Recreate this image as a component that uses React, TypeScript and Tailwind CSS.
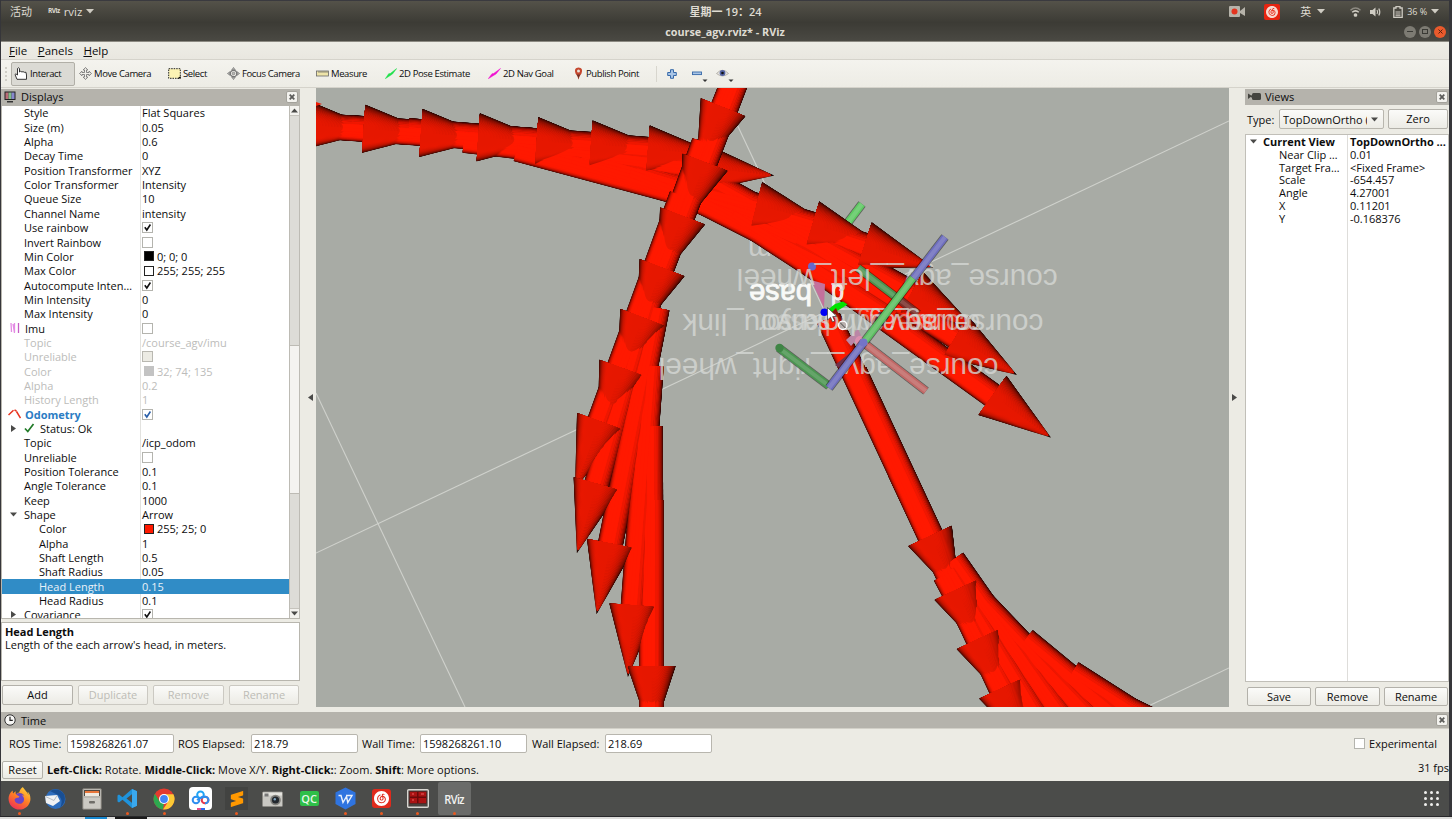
import React from "react";
import { FaFirefoxBrowser } from "react-icons/fa";
import { SiNeteasecloudmusic, SiSublimetext } from "react-icons/si";

/* ------------------------------------------------------------------ */
/* 3D view                                                            */
/* ------------------------------------------------------------------ */

type Pose = [x: number, y: number, angle: number];
type ShaftSpec = [x: number, y: number, angle: number, length: number];

const HEAD_LENGTH = 72;
const HEAD_RADIUS = 24;
const SHAFT_RADIUS = 12.5;
const SHAFT_LENGTH = 240;

/* Position of an arrow is the centre of its head's base. */
const acrossArrows: Pose[] = [
  [992.5, 395.5, 35.8],
  [955.7, 336.8, 32],
  [911.4, 293, 29],
  [864.5, 245.3, 17.9],
  [812.5, 224.5, 16.5],
  [756.5, 205.5, 14],
  [702.5, 167.5, 6.5],
  [648, 149.5, 4.5],
  [591, 144.5, 4],
  [536.7, 141.2, 4],
  [478.3, 137.3, 4],
  [421, 133, 4],
  [363.7, 128.8, 4],
  [307, 125, 4],
  [1001, 688.5, 65],
  [978.5, 639, 65],
  [956.3, 589.8, 65],
  [930, 536, 65],
];

const downArrows: Pose[] = [
  [651.5, 740, 90],
  [651.5, 666.3, 89.7],
  [633.3, 605.2, 94.3],
  [610.5, 543.5, 101.2],
  [596.7, 483.8, 106],
  [599.6, 421.2, 110],
  [622, 368, 110],
  [642.7, 317.5, 111],
  [662, 267.7, 111],
  [682.5, 216, 111],
  [705, 162.3, 111],
  [723, 107.3, 112],
];

const shaftsOf = (list: Pose[]) =>
  list.map(([x, y, a]): ShaftSpec => {
    const t = (a * Math.PI) / 180;
    return [x - SHAFT_LENGTH * Math.cos(t), y - SHAFT_LENGTH * Math.sin(t), a, SHAFT_LENGTH];
  });

const acrossShafts: ShaftSpec[] = [
  ...shaftsOf(acrossArrows),
  [517, 149, 15, 180],
  [572, 160, 17, 190],
  [630, 173, 22, 180],
  [685, 193, 27, 180],
  [733, 214, 33, 190],
  [1122, 706, 26, 240],
  [1072, 673, 32.5, 240],
  [1025, 640, 39.5, 240],
  [983, 603, 46.5, 240],
  [953, 560, 55, 240],
  [950, 570, 59, 240],
  [945, 575, 62, 240],
];
const downShafts = shaftsOf(downArrows);

/* Brightness of a surface whose normal faces the viewer by u (0 edge, 1 crest). */
const ramp = (stops: [number, number][], u: number) => {
  for (let i = 1; i < stops.length; i++) {
    const [u1, v1] = stops[i];
    if (u <= u1) {
      const [u0, v0] = stops[i - 1];
      return v0 + ((v1 - v0) * (u - u0)) / (u1 - u0);
    }
  }
  return stops[stops.length - 1][1];
};
const darkSide: [number, number][] = [[0, 0.06], [0.3, 0.26], [0.55, 0.55], [0.78, 0.84], [0.95, 1], [1, 1]];
const lightSide: [number, number][] = [[0, 0.16], [0.3, 0.5], [0.55, 0.84], [0.74, 1], [1, 1]];
const red = (v: number) => `rgb(${Math.round(255 * v)} ${Math.round(25 * v)} 0)`;
const coneRed = (side: [number, number][], u: number) => red(ramp(side, u) * (0.9 + 0.04 * (1 - u)));

const LEVELS = Array.from({ length: 24 }, (_, h) => h);

function coneSlice(h: number) {
  const end = HEAD_LENGTH * (1 - h / HEAD_RADIUS);
  const pts: [number, number][] = [];
  for (let i = 0; i <= 10; i++) {
    const x = end * (1 - Math.pow(1 - i / 10, 2));
    const r = HEAD_RADIUS * (1 - x / HEAD_LENGTH);
    pts.push([x, Math.sqrt(Math.max(0, r * r - h * h))]);
  }
  const f = (p: [number, number], s: number) => `${p[0].toFixed(2)} ${(p[1] * s).toFixed(2)}`;
  const upper = pts.map((p) => f(p, -1)).join("L");
  const lower = [...pts].reverse().map((p) => f(p, 1)).join("L");
  return { full: `M${upper}L${lower}Z`, upper: `M${upper}L${end.toFixed(2)} 0L0 0Z` };
}

function ArrowDefs() {
  return (
    <defs>
      {LEVELS.map((h) => {
        const end = Math.max(1, HEAD_LENGTH * (1 - h / HEAD_RADIUS));
        const slice = coneSlice(h);
        const stops = (side: [number, number][]) =>
          [0, 0.25, 0.5, 0.75, 1].map((o) => {
            const r = HEAD_RADIUS * (1 - (o * end) / HEAD_LENGTH);
            const u = h === 0 ? 0 : Math.min(1, h / r);
            return <stop key={o} offset={o} stopColor={coneRed(side, u)} />;
          });
        return (
          <React.Fragment key={h}>
            <linearGradient id={`cl${h}`} gradientUnits="userSpaceOnUse" x1="0" y1="0" x2={end} y2="0">{stops(lightSide)}</linearGradient>
            <linearGradient id={`cd${h}`} gradientUnits="userSpaceOnUse" x1="0" y1="0" x2={end} y2="0">{stops(darkSide)}</linearGradient>
            <g id={`cone${h}`}>
              <path d={slice.full} fill={`url(#cl${h})`} />
              <path d={slice.upper} fill={`url(#cd${h})`} />
            </g>
          </React.Fragment>
        );
      })}
    </defs>
  );
}

/* Paints the arrows height level by height level, so that overlapping ones cut into each other. */
function Arrows({ heads, shafts }: { heads: Pose[]; shafts: ShaftSpec[] }) {
  return (
    <g>
      {LEVELS.map((h) => (
        <g key={h}>
          {h < SHAFT_RADIUS &&
            shafts.map(([x, y, a, len], i) => {
              const w = Math.sqrt(SHAFT_RADIUS * SHAFT_RADIUS - h * h);
              const u = h / SHAFT_RADIUS;
              return (
                <g key={i} transform={`translate(${x.toFixed(2)} ${y.toFixed(2)}) rotate(${a})`}>
                  <rect x={0} y={-w} width={len} height={w * 2} fill={red(ramp(lightSide, u))} />
                  <rect x={0} y={-w} width={len} height={w} fill={red(ramp(darkSide, u))} />
                </g>
              );
            })}
          {heads.map(([x, y, a], i) => (
            <use key={i} href={`#cone${h}`} transform={`translate(${x} ${y}) rotate(${a})`} />
          ))}
        </g>
      ))}
    </g>
  );
}

function Axis({ from, to, color, w = 8 }: { from: [number, number]; to: [number, number]; color: string; w?: number }) {
  const [x1, y1] = from;
  const [x2, y2] = to;
  return (
    <g>
      <line x1={x1} y1={y1} x2={x2} y2={y2} stroke="#000" strokeOpacity={0.45} strokeWidth={w} />
      <line x1={x1} y1={y1} x2={x2} y2={y2} stroke={color} strokeWidth={w - 1.6} />
      <line x1={x1} y1={y1} x2={x2} y2={y2} stroke="#fff" strokeOpacity={0.14} strokeWidth={w - 5} />
    </g>
  );
}

function FrameLabel({ right, base, width, children, strong, opacity = 0.78 }: {
  right: number; base: number; width: number; children: string; strong?: boolean; opacity?: number;
}) {
  return (
    <text
      transform={`translate(${right} ${base}) rotate(180)`}
      textLength={width}
      lengthAdjust="spacingAndGlyphs"
      fontFamily="Liberation Sans, sans-serif"
      fontSize={29}
      fill={strong ? "#f8f9f7" : "#d6d8d5"}
      stroke={strong ? "#f8f9f7" : "none"}
      strokeWidth={strong ? 0.9 : 0}
      fillOpacity={opacity}
    >
      {children}
    </text>
  );
}

function Viewport() {
  return (
    <svg className="block h-[619px] w-[913px] shrink-0" viewBox="316 88 913 619">
      <ArrowDefs />
      <defs>
        <linearGradient id="fadeGreen" gradientUnits="userSpaceOnUse" x1="858" y1="268" x2="918" y2="312">
          <stop offset="0.65" stopColor="#4b9450" />
          <stop offset="0.75" stopColor="#7a2f2a" />
        </linearGradient>
      </defs>
      <rect x="316" y="88" width="913" height="619" fill="#a8aba5" />
      <g stroke="#cfd1cc" strokeWidth="1.1" fill="none">
        <path d="M316 393L465 707" />
        <path d="M316 553L1229 121" />
        <path d="M720 88L1010 707" />
        <path d="M1140 710L1229 668" />
      </g>
      <FrameLabel right={772} base={240} width={24} opacity={0.75}>m</FrameLabel>
      <FrameLabel right={812} base={284} width={63} strong opacity={1}>base</FrameLabel>
      <Axis from={[862, 204]} to={[843, 229]} color="#5fc963" w={9} />

      <path d="M945 555L1010 620L1120 707L1010 707L985 640Z" fill="#c81300" />
      <Arrows heads={acrossArrows} shafts={acrossShafts} />
      <Arrows heads={downArrows} shafts={downShafts} />
      <path d="M316 102L322 104L316 106Z" fill="#f01800" />

      <FrameLabel right={844} base={284} width={13} strong opacity={0.9}>d</FrameLabel>
      <Axis from={[858, 268]} to={[918, 314]} color="url(#fadeGreen)" w={9} />
      <path d="M872 322L880 311L889 317L881 330Z" fill="#70324a" />
      <path d="M835 365L851 352L845 372Z" fill="#70324a" />
      <path d="M811 280L825 284L824 308Z" fill="#c4719c" />
      <path d="M846 340L858 329L861 335L851 346Z" fill="#bb86a6" />
      <circle cx="860" cy="341" r="5" fill="#dc8fae" />
      <circle cx="812" cy="266.5" r="4" fill="#6868cc" />

      <g>
        <FrameLabel right={1057.7} base={269} width={321}>course_agv__left_wheel</FrameLabel>
        <FrameLabel right={1043.5} base={314} width={361}>course_agv__hokuyou_link</FrameLabel>
        <FrameLabel right={980} base={314} width={221}>course_agv__sensor</FrameLabel>
        <FrameLabel right={972} base={314} width={195} opacity={0.55}>course_agv_base</FrameLabel>
        <FrameLabel right={998.5} base={358} width={340}>course_agv__right_wheel</FrameLabel>
      </g>

      <Axis from={[864, 343]} to={[926, 391]} color="#c06866" w={9} />
      <Axis from={[945, 237]} to={[912, 280]} color="#6e6ebd" w={9} />
      <Axis from={[913, 278]} to={[865, 341]} color="#5cbd60" w={9} />
      <Axis from={[779, 348]} to={[829, 386]} color="#4c9651" w={9} />
      <Axis from={[864, 342]} to={[829, 388]} color="#6e6ebd" w={9} />
      <circle cx="779.5" cy="348" r="4.2" fill="#3f8545" />
      <circle cx="863.5" cy="342.5" r="4" fill="#7474c8" />
      <path d="M828 309.500L835 304L843 301.500L847.500 304.500L838 310.500L831 313Z" fill="#00e400" />
      <path d="M831 313L836 308L839 315Z" fill="#8a1408" />
      <circle cx="824.3" cy="312.200" r="3.800" fill="#0000f5" />
      <path d="M827.500 307.500V320L830.500 317.300L832.500 322L834.700 321L832.700 316.600L836.700 316.300Z" fill="#fff" stroke="#333" strokeWidth="0.7" />
      <circle cx="842.7" cy="325.300" r="4.200" fill="#b9b0ad" stroke="#fff" strokeWidth="1.300" />
      <path d="M840 322.500L845.400 328" stroke="#444" strokeWidth="1" />
    </svg>
  );
}

/* ------------------------------------------------------------------ */
/* Small widgets                                                      */
/* ------------------------------------------------------------------ */

function CloseBox() {
  return (
    <div className="flex h-[12px] w-[12px] shrink-0 items-center justify-center rounded-[2px] border border-[#a3a19a] bg-[#f3f2ee]">
      <svg className="h-[6px] w-[6px]" viewBox="0 0 6 6"><path d="M0.700 0.700L5.300 5.300M5.300 0.700L0.700 5.300" stroke="#5c5c5a" strokeWidth="1.800" /></svg>
    </div>
  );
}

function Button({ children, className, disabled }: { children: string; className: string; disabled?: boolean }) {
  return (
    <div className={`flex shrink-0 items-center justify-center rounded-[2px] border bg-linear-to-b from-[#fbfbf9] to-[#ecebe5] pb-px ${disabled ? "border-[#cbc9c2] text-[#bdbcb6]" : "border-[#b3b1aa] text-[#0c0c0c]"} ${className}`}>
      {children}
    </div>
  );
}

function CheckBox({ on, tone = "normal" }: { on?: boolean; tone?: "normal" | "off" | "blue" }) {
  return (
    <div className={`h-[11px] w-[11px] shrink-0 border ${tone === "off" ? "border-[#b9b8b1] bg-[#ecebe4]" : "border-[#b4b4ae] bg-white"}`}>
      {on && (
        <svg className="block h-[9px] w-[9px]" viewBox="0 0 9 9">
          <path d="M1.800 4.300L3.800 7L7.400 1.500" fill="none" stroke={tone === "blue" ? "#2a5fa8" : "#111"} strokeWidth="1.600" />
        </svg>
      )}
    </div>
  );
}

function Triangle({ dir }: { dir: "right" | "down" | "up" | "left" }) {
  const d = { right: "M1 0L6 3.500L1 7Z", down: "M0 1.500H7L3.500 5.500Z", up: "M0 5.500H7L3.500 1.500Z", left: "M6 0L1 3.500L6 7Z" }[dir];
  return <svg className="block h-[7px] w-[7px] shrink-0" viewBox="0 0 7 7"><path d={d} fill="#4a4a48" /></svg>;
}

/* ------------------------------------------------------------------ */
/* Top bars                                                           */
/* ------------------------------------------------------------------ */

function TopBars() {
  return (
    <div className="h-[42px] shrink-0 border-b border-[#8c8a82] bg-linear-to-b from-[#55534a] via-[#3c3b35] via-55% to-[#4a4943] text-[#dfdbd2]">
      <div className="flex h-[22px] items-center border-t border-[#3a3a3f]">
        <div className="flex w-[480px] items-center pl-[9px] text-[11px]">
          <span>活动</span>
          <span className="ml-[16px] text-[6.500px] font-bold tracking-[-0.500px]">RViz</span>
          <span className="ml-[4px] text-[11.500px]">rviz</span>
          <svg className="ml-[4px] h-[5px] w-[8px]" viewBox="0 0 8 5"><path d="M0 0H8L4 4.500Z" fill="#cfccc3" /></svg>
        </div>
        <div className="flex-1 pl-px text-center text-[11px] font-semibold">星期一 19：24</div>
        <div className="flex w-[480px] items-center justify-end pr-[10px] text-[10px]">
          <svg className="h-[11px] w-[16px]" viewBox="0 0 16 11"><rect width="11" height="11" rx="1" fill="#b6b3aa" /><path d="M11 5L16 1V10L11 7Z" fill="#b6b3aa" /><circle cx="5.500" cy="5.500" r="3" fill="#e3341f" /></svg>
          <span className="ml-[19px] flex h-[16px] w-[16px] items-center justify-center rounded-[2px] bg-[#e62410]"><SiNeteasecloudmusic className="h-[12px] w-[12px] text-[#f7d9d0]" /></span>
          <span className="ml-[20px] text-[11px]">英</span>
          <svg className="ml-[6px] h-[5px] w-[8px]" viewBox="0 0 8 5"><path d="M0 0H8L4 4.500Z" fill="#cfccc3" /></svg>
          <svg className="ml-[25px] h-[10px] w-[11px]" viewBox="0 0 11 10" fill="none" stroke="#cfccc3" strokeWidth="1.500"><path d="M0.500 3.200Q5.500 -1.200 10.500 3.200" stroke="#8d8a82" /><path d="M2.200 5.300Q5.500 2.400 8.800 5.300" /><circle cx="5.500" cy="8" r="1.100" fill="#cfccc3" /></svg>
          <svg className="ml-[9px] h-[10px] w-[12px]" viewBox="0 0 12 10"><path d="M0 3H2.500L5.500 0.500V9.500L2.500 7H0Z" fill="#cfccc3" /><path d="M7 3Q8.300 5 7 7M8.800 1.500Q10.800 5 8.800 8.500" fill="none" stroke="#cfccc3" strokeWidth="1.200" /></svg>
          <svg className="ml-[11px] h-[12px] w-[10px]" viewBox="0 0 10 12"><path d="M3 0.700H7V2H9.200V11.300H0.800V2H3Z" fill="none" stroke="#cfccc3" strokeWidth="1.300" /><path d="M2.500 6H7.500M2.500 8H7.500M2.500 9.800H7.500" stroke="#cfccc3" strokeWidth="1.100" /></svg>
          <span className="ml-[4px] text-[9px] tracking-[-0.100px] whitespace-nowrap">36 %</span>
          <svg className="ml-[4px] h-[5px] w-[8px]" viewBox="0 0 8 5"><path d="M0 0H8L4 4.500Z" fill="#cfccc3" /></svg>
        </div>
      </div>
      <div className="flex h-[19px] items-center">
        <div className="w-[60px]" />
        <div className="flex-1 pt-px text-center text-[10.800px] font-bold">course_agv.rviz* - RViz</div>
        <div className="flex w-[60px] justify-end gap-[3px] pr-[3px]">
          <span className="flex h-[12px] w-[12px] items-center justify-center rounded-full bg-[#7d7b73]"><span className="h-px w-[6px] bg-[#3a3a35]" /></span>
          <span className="flex h-[12px] w-[12px] items-center justify-center rounded-full bg-[#7d7b73]"><span className="h-[5px] w-[6px] border border-[#3a3a35]" /></span>
          <span className="flex h-[12px] w-[12px] items-center justify-center rounded-full bg-[#ea5a2c]"><svg className="h-[5px] w-[5px]" viewBox="0 0 5 5"><path d="M0.500 0.500L4.500 4.500M4.500 0.500L0.500 4.500" stroke="#5a2010" /></svg></span>
        </div>
      </div>
    </div>
  );
}

const moveIcon = (
  <svg className="block h-[13px] w-[13px]" viewBox="0 0 13 13"><path d="M6.500 0.500L8.800 3H7.500V5.500H10V4.200L12.500 6.500L10 8.800V7.500H7.500V10H8.800L6.500 12.500L4.200 10H5.500V7.500H3V8.800L0.500 6.500L3 4.200V5.500H5.500V3H4.200Z" fill="#efeee9" stroke="#6b6b6b" strokeWidth="0.800" /></svg>
);
const focusIcon = (
  <svg className="block h-[13px] w-[13px]" viewBox="0 0 13 13"><g fill="#b9b9b5" stroke="#777" strokeWidth="0.700"><path d="M6.500 0.400L8.300 3H4.700ZM6.500 12.600L8.300 10H4.700ZM0.400 6.500L3 4.700V8.300ZM12.600 6.500L10 4.700V8.300Z" /><circle cx="6.500" cy="6.500" r="3.200" fill="none" strokeWidth="1.200" /><circle cx="6.500" cy="6.500" r="1.300" /></g></svg>
);

function Tool({ icon, label, className }: { icon: React.ReactNode; label: string; className: string }) {
  return (
    <div className={`flex h-[24px] shrink-0 items-center whitespace-nowrap ${className}`}>
      {icon}
      <span className="ml-[2px]">{label}</span>
    </div>
  );
}

function Toolbar() {
  return (
    <div className="flex h-[29px] shrink-0 items-center border-t border-b border-[#d5d3cb] bg-linear-to-b from-[#f4f3ee] to-[#edece5] text-[9.500px] tracking-[-0.380px] text-[#0c0c0c]">
      <div className="ml-[4px] h-[14px] w-[2px] border-l-2 border-dotted border-[#d0cec6]" />
      <Tool
        className="ml-[4px] w-[64px] rounded-[2px] border border-[#b1afa7] bg-[#dbdad4] pl-[2px]"
        label="Interact"
        icon={<svg className="block h-[13px] w-[14px]" viewBox="0 0 14 13"><path d="M3.500 7V1.500Q4.500 0 5.500 1.500V5L6.500 4.300L8 5L9 4.600L10.300 5.300L12 5.300L12.500 8V12.300H3L1 7.500Q1.500 6 3.500 8Z" fill="#fff" stroke="#222" strokeWidth="0.900" /></svg>}
      />
      <Tool className="ml-[4px] w-[89px]" label="Move Camera" icon={moveIcon} />
      <Tool className="w-[59px]" label="Select" icon={<svg className="block h-[11px] w-[13px]" viewBox="0 0 13 11"><rect x="0.700" y="0.700" width="11.600" height="9.600" fill="#fcf3b4" stroke="#222" strokeWidth="1" strokeDasharray="1.500 1" /><path d="M12.500 8V10.500H9.500Z" fill="#000" /></svg>} />
      <Tool className="w-[89px]" label="Focus Camera" icon={focusIcon} />
      <Tool className="w-[69px]" label="Measure" icon={<svg className="block h-[7px] w-[13px]" viewBox="0 0 13 7"><rect x="0.500" y="1" width="12" height="5" fill="#eee4a8" stroke="#666" strokeWidth="0.800" /><path d="M3 1V3M5 1V3M7 1V3M9 1V3M11 1V3" stroke="#666" strokeWidth="0.700" /></svg>} />
      <Tool className="w-[103px]" label="2D Pose Estimate" icon={<svg className="block h-[11px] w-[12px]" viewBox="0 0 12 11"><path d="M0.300 10.700L3.700 5.700L5.300 5.500L11.700 0.500L7.500 6L6 7Z" fill="#1fe04a" stroke="#1fe04a" strokeWidth="0.500" /></svg>} />
      <Tool className="w-[85px]" label="2D Nav Goal" icon={<svg className="block h-[11px] w-[13px]" viewBox="0 0 13 11"><path d="M0.300 10.700L4 5.700L5.600 5.500L12.500 0.500L8 6L6.300 7Z" fill="#f012d0" stroke="#f012d0" strokeWidth="0.500" /></svg>} />
      <Tool className="w-[83px]" label="Publish Point" icon={<svg className="block h-[13px] w-[11px]" viewBox="0 0 11 13"><path d="M5.500 12.500Q5 9 2.500 6.500Q0.500 0.500 5.500 0.400Q10.500 0.500 8.500 6.500Q6 9 5.500 12.500Z" fill="#c5472e" /><path d="M5.500 12.500Q5 9 3.500 7.500H7.500Q6 9 5.500 12.500Z" fill="#6d3328" /><circle cx="5.500" cy="4" r="1.500" fill="#e9e2da" /></svg>} />
      <div className="h-[16px] w-px bg-[#d8d6ce]" />
      <svg className="ml-[10px] block h-[10px] w-[10px]" viewBox="0 0 10 10"><path d="M3.500 0.700H6.500V3.500H9.300V6.500H6.500V9.300H3.500V6.500H0.700V3.500H3.500Z" fill="#a9c5e6" stroke="#3668a8" /></svg>
      <svg className="ml-[15px] block h-[16px] w-[17px]" viewBox="0 0 17 16"><rect x="0.500" y="6" width="9" height="2.600" fill="#a9c5e6" stroke="#3668a8" strokeWidth="0.900" /><path d="M10.500 13.500H15.500L13 16Z" fill="#333" /></svg>
      <svg className="ml-[7px] block h-[16px] w-[18px]" viewBox="0 0 18 16"><path d="M0.500 7.500Q6.500 1 12.500 7.500Q6.500 12.500 0.500 7.500Z" fill="#e6e4df" stroke="#aaa69e" strokeWidth="0.800" /><circle cx="6.500" cy="7" r="2.900" fill="#5464a4" /><circle cx="6.500" cy="7" r="1.300" fill="#111" /><path d="M12.500 13.500H17.500L15 16Z" fill="#333" /></svg>
    </div>
  );
}

/* ------------------------------------------------------------------ */
/* Displays panel                                                     */
/* ------------------------------------------------------------------ */

interface Row {
  name: string;
  value?: string;
  check?: "on" | "off" | "blue" | "disabled";
  swatch?: string;
  depth?: 1 | 2;
  icon?: "imu" | "odom" | "ok";
  tri?: "right" | "down";
  dim?: boolean;
  selected?: boolean;
}

const rows: Row[] = [
  { name: "Style", value: "Flat Squares" },
  { name: "Size (m)", value: "0.05" },
  { name: "Alpha", value: "0.6" },
  { name: "Decay Time", value: "0" },
  { name: "Position Transformer", value: "XYZ" },
  { name: "Color Transformer", value: "Intensity" },
  { name: "Queue Size", value: "10" },
  { name: "Channel Name", value: "intensity" },
  { name: "Use rainbow", check: "on" },
  { name: "Invert Rainbow", check: "off" },
  { name: "Min Color", value: "0; 0; 0", swatch: "#000000" },
  { name: "Max Color", value: "255; 255; 255", swatch: "#ffffff" },
  { name: "Autocompute Inten…", check: "on" },
  { name: "Min Intensity", value: "0" },
  { name: "Max Intensity", value: "0" },
  { name: "Imu", check: "off", icon: "imu" },
  { name: "Topic", value: "/course_agv/imu", dim: true },
  { name: "Unreliable", check: "disabled", dim: true },
  { name: "Color", value: "32; 74; 135", swatch: "#c3c3c3", dim: true },
  { name: "Alpha", value: "0.2", dim: true },
  { name: "History Length", value: "1", dim: true },
  { name: "Odometry", check: "blue", icon: "odom" },
  { name: "Status: Ok", icon: "ok", tri: "right" },
  { name: "Topic", value: "/icp_odom" },
  { name: "Unreliable", check: "off" },
  { name: "Position Tolerance", value: "0.1" },
  { name: "Angle Tolerance", value: "0.1" },
  { name: "Keep", value: "1000" },
  { name: "Shape", value: "Arrow", tri: "down" },
  { name: "Color", value: "255; 25; 0", swatch: "#ff1900", depth: 2 },
  { name: "Alpha", value: "1", depth: 2 },
  { name: "Shaft Length", value: "0.5", depth: 2 },
  { name: "Shaft Radius", value: "0.05", depth: 2 },
  { name: "Head Length", value: "0.15", depth: 2, selected: true },
  { name: "Head Radius", value: "0.1", depth: 2 },
  { name: "Covariance", check: "on", tri: "right" },
];

function RowIcon({ kind }: { kind: "imu" | "odom" | "ok" }) {
  if (kind === "imu")
    return <svg className="block h-[12px] w-[10px] shrink-0" viewBox="0 0 10 12"><path d="M1 1L1.500 10M3 2L4.500 11M4.500 1V10" stroke="#e48be4" strokeWidth="1.300" /><path d="M8.500 1V11" stroke="#c65cc6" strokeWidth="1.300" /></svg>;
  if (kind === "odom")
    return <svg className="block h-[10px] w-[13px] shrink-0" viewBox="0 0 13 10"><path d="M0.500 6L5.500 1.200M6.500 1L8.500 2M8.500 2.500L12.500 9" fill="none" stroke="#e8321e" strokeWidth="1.500" /></svg>;
  return <svg className="block h-[10px] w-[11px] shrink-0" viewBox="0 0 11 10"><path d="M1 5.500L3.800 8.500L9.500 1" fill="none" stroke="#217a27" strokeWidth="1.700" /></svg>;
}

function TreeRow({ row }: { row: Row }) {
  const tone = row.selected ? "bg-[#308cc6] text-[#e8f1f8]" : row.dim ? "text-[#bcbcba]" : "text-[#0c0c0c]";
  return (
    <div className={`flex h-[14.350px] shrink-0 items-center whitespace-nowrap ${tone}`}>
      <div className={`flex h-full w-[139px] shrink-0 items-center overflow-hidden border-r pb-[0.500px] ${row.selected ? "border-[#308cc6]" : "border-[#e2e2df]"}`}>
        {row.icon === "imu" || row.icon === "odom" ? (
          <div className="flex w-[23px] shrink-0 justify-center pr-[1px] pl-[3px]"><RowIcon kind={row.icon} /></div>
        ) : (
          <div className="flex w-[22px] shrink-0 justify-start pl-[8px]">{row.tri && <Triangle dir={row.tri} />}</div>
        )}
        {row.icon === "ok" && <div className="w-[16px] shrink-0"><RowIcon kind="ok" /></div>}
        {row.depth === 2 && <div className="w-[15px] shrink-0" />}
        <span className={row.icon === "odom" ? "font-bold text-[#2a7cc4]" : ""}>{row.name}</span>
      </div>
      <div className="flex items-center pb-[0.500px] pl-[1px]">
        {row.check && <CheckBox on={row.check === "on" || row.check === "blue"} tone={row.check === "blue" ? "blue" : row.check === "disabled" ? "off" : "normal"} />}
        {row.swatch && <span className={`mr-[3px] ml-[2px] h-[10px] w-[10px] border ${row.dim ? "border-[#c3c3c3]" : "border-[#222]"}`} style={{ backgroundColor: row.swatch }} />}
        {row.value && <span>{row.value}</span>}
      </div>
    </div>
  );
}

function DisplaysPanel() {
  return (
    <div className="flex w-[299px] shrink-0 flex-col pt-px">
      <div className="flex h-[17px] shrink-0 items-center bg-[#b5b3ac] pr-[2px] pb-[2px] pl-[3px] text-[11px] text-[#0c0c0c]">
        <svg className="block h-[12px] w-[12px]" viewBox="0 0 12 12"><rect x="0.500" y="0.500" width="11" height="8.500" fill="#222" /><rect x="1.500" y="1.500" width="3" height="6.500" fill="#b96d78" /><rect x="4.500" y="1.500" width="3" height="6.500" fill="#81bd8a" /><rect x="7.500" y="1.500" width="3" height="6.500" fill="#8787cc" /><path d="M3 11.500H9V10H3Z" fill="#333" /></svg>
        <span className="ml-[5px] flex-1">Displays</span>
        <CloseBox />
      </div>
      <div className="flex h-[513px] shrink-0 border-b border-l border-[#b8b6ae] bg-white">
        <div className="w-[287px] shrink-0 overflow-hidden text-[11px]">
          {rows.map((r, i) => <TreeRow key={i} row={r} />)}
        </div>
        <div className="flex w-[11px] flex-col items-center border-r border-l border-[#bdbbb4] bg-[#dddcd7]">
          <div className="flex h-[10px] w-full items-center justify-center border-b border-[#c5c3bc] bg-[#f3f2ee]"><Triangle dir="up" /></div>
          <div className="h-[229px] w-full" />
          <div className="h-[149px] w-full border-t border-b border-[#bdbbb4] bg-[#f4f3f0]" />
          <div className="w-full flex-1" />
          <div className="flex h-[10px] w-full items-center justify-center border-t border-[#c5c3bc] bg-[#f3f2ee]"><Triangle dir="down" /></div>
        </div>
      </div>
      <div className="mt-[3px] h-[59px] shrink-0 border border-[#b8b6ae] bg-white pt-[3px] pl-[3px] text-[11px] leading-[12.500px] text-[#0c0c0c]">
        <div className="font-bold tracking-[-0.060px]">Head Length</div>
        <div className="tracking-[-0.020px]">Length of the each arrow's head, in meters.</div>
      </div>
      <div className="mt-[4px] flex h-[20px] gap-[5px] pl-[1px] text-[11px]">
        <Button className="w-[71px]">Add</Button>
        <Button className="w-[70px]" disabled>Duplicate</Button>
        <Button className="w-[71px]" disabled>Remove</Button>
        <Button className="w-[70px]" disabled>Rename</Button>
      </div>
    </div>
  );
}

/* ------------------------------------------------------------------ */
/* Views panel                                                        */
/* ------------------------------------------------------------------ */

const viewRows: [string, string][] = [
  ["Near Clip …", "0.01"],
  ["Target Fra…", "<Fixed Frame>"],
  ["Scale", "-654.457"],
  ["Angle", "4.27001"],
  ["X", "0.11201"],
  ["Y", "-0.168376"],
];

function ViewsPanel() {
  return (
    <div className="flex w-[204px] shrink-0 flex-col pt-px text-[11px] text-[#0c0c0c]">
      <div className="flex h-[16px] shrink-0 items-center bg-[#b5b3ac] pr-[1px] pb-px pl-[3px]">
        <svg className="block h-[7px] w-[13px]" viewBox="0 0 13 7"><rect x="4" y="0" width="9" height="7" rx="1.500" fill="#44443f" /><path d="M0 0.500L4 3L0 6Z" fill="#44443f" /><rect x="3" y="2.500" width="2" height="2" fill="#44443f" /></svg>
        <span className="ml-[4px] flex-1">Views</span>
        <CloseBox />
      </div>
      <div className="mt-[4px] flex h-[20px] shrink-0 items-center pl-[2px]">
        <span className="w-[32px] shrink-0">Type:</span>
        <div className="flex h-[20px] w-[105px] shrink-0 items-center rounded-[2px] border border-[#b8b6ae] bg-linear-to-b from-[#fbfbf9] to-[#ecebe5] pl-[3px]">
          <span className="w-[84px] overflow-hidden py-[3px] whitespace-nowrap">TopDownOrtho (rviz)</span>
          <span className="ml-[4px] flex"><Triangle dir="down" /></span>
        </div>
        <Button className="ml-[4px] h-[20px] w-[60px]">Zero</Button>
      </div>
      <div className="mt-[5px] flex h-[548px] shrink-0 flex-col border border-[#c1bfb8] bg-white">
        <div className="flex h-[13px] shrink-0 items-center font-bold">
          <div className="flex h-[13px] w-[102px] items-center border-r border-[#deddda] pl-[4px]"><Triangle dir="down" /><span className="ml-[6px] whitespace-nowrap">Current View</span></div>
          <span className="pl-[2px] tracking-[-0.050px] whitespace-nowrap">TopDownOrtho …</span>
        </div>
        {viewRows.map(([k, v]) => (
          <div key={k} className="flex h-[12.800px] shrink-0 items-center whitespace-nowrap">
            <div className="flex h-full w-[102px] items-center border-r border-[#deddda] pl-[33px]">{k}</div>
            <span className="pl-[2px]">{v}</span>
          </div>
        ))}
        <div className="w-[102px] flex-1 border-r border-[#deddda]" />
      </div>
      <div className="mt-[4px] flex h-[20px] shrink-0 gap-[4px] pt-px pl-[2px]">
        <Button className="w-[64px]">Save</Button>
        <Button className="w-[65px]">Remove</Button>
        <Button className="w-[64px]">Rename</Button>
      </div>
    </div>
  );
}

/* ------------------------------------------------------------------ */
/* Time panel, status bar                                             */
/* ------------------------------------------------------------------ */

function Field({ label, value, labelClass }: { label: string; value: string; labelClass: string }) {
  return (
    <>
      <span className={`shrink-0 whitespace-nowrap ${labelClass}`}>{label}</span>
      <span className="flex h-[19px] w-[107px] shrink-0 items-center rounded-[2px] border border-[#b8b6ae] bg-white pb-px pl-[2px]">{value}</span>
    </>
  );
}

function TimePanel() {
  return (
    <div className="flex h-[69px] shrink-0 flex-col text-[11px] text-[#0c0c0c]">
      <div className="flex h-[16px] shrink-0 items-center bg-[#b5b3ac] pr-[1px] pl-[3px]">
        <svg className="block h-[12px] w-[12px]" viewBox="0 0 12 12"><circle cx="6" cy="6" r="5.200" fill="#f7f7f5" stroke="#333" /><path d="M6 2.800V6.300H8.800" fill="none" stroke="#222" strokeWidth="1.200" /></svg>
        <span className="ml-[5px] flex-1">Time</span>
        <CloseBox />
      </div>
      <div className="flex h-[31px] shrink-0 items-center border-t border-[#d2d0c8] pb-px pl-[8px]">
        <Field label="ROS Time:" value="1598268261.07" labelClass="w-[58px]" />
        <Field label="ROS Elapsed:" value="218.79" labelClass="ml-[4px] w-[73px]" />
        <Field label="Wall Time:" value="1598268261.10" labelClass="ml-[4px] w-[58px]" />
        <Field label="Wall Elapsed:" value="218.69" labelClass="ml-[5px] w-[73px]" />
        <div className="flex-1" />
        <CheckBox />
        <span className="mr-[12px] ml-[4px]">Experimental</span>
      </div>
      <div className="flex h-[22px] shrink-0 items-center pl-[1px]">
        <Button className="h-[18px] w-[41px]">Reset</Button>
        <span className="mt-[-1px] ml-[4px] flex-1 tracking-[0.030px] whitespace-nowrap">
          <b>Left-Click:</b> Rotate. <b>Middle-Click:</b> Move X/Y. <b>Right-Click:</b>: Zoom. <b>Shift</b>: More options.
        </span>
        <span className="mt-[-6px]">31 fps</span>
      </div>
    </div>
  );
}

/* ------------------------------------------------------------------ */
/* Dock                                                               */
/* ------------------------------------------------------------------ */

const dockItems: { icon: React.ReactNode; running?: boolean; active?: boolean }[] = [
  {
    running: true,
    icon: (
      <span className="relative flex">
        <svg className="absolute h-0 w-0"><defs><linearGradient id="fox" x1="0.8" y1="0" x2="0.2" y2="1"><stop offset="0" stopColor="#ffd53a" /><stop offset="0.5" stopColor="#ff7a26" /><stop offset="1" stopColor="#ec2b5b" /></linearGradient></defs></svg>
        <span className="absolute top-[6px] left-[5px] h-[11px] w-[12px] rounded-full bg-[#6a45c8]" />
        <FaFirefoxBrowser className="relative h-[23px] w-[23px]" style={{ fill: "url(#fox)" }} />
      </span>
    ),
  },
  { icon: <svg className="h-[22px] w-[22px]" viewBox="0 0 22 22"><circle cx="11.500" cy="11" r="10" fill="#2d6dbd" /><path d="M6 3Q14 -1 20 6Q23 14 16 20Q20 12 14 7Z" fill="#184e93" /><path d="M1 8L13 7L16 13L9 18L2 15Z" fill="#f0f2f4" /><path d="M1.500 8.500L10 12.500L13 7.500" fill="none" stroke="#b5bcc4" /></svg> },
  { icon: <svg className="h-[22px] w-[20px]" viewBox="0 0 20 22"><rect x="0.500" y="0.500" width="19" height="21" rx="1.500" fill="#b8b6b0" stroke="#77756f" /><rect x="2" y="2" width="16" height="6" fill="#51483f" /><rect x="3" y="3" width="14" height="2" fill="#e9763a" /><rect x="3" y="5" width="14" height="3" fill="#efe9df" /><rect x="2" y="10" width="16" height="10" fill="#cbc9c3" /><rect x="7" y="13" width="6" height="2.500" rx="1" fill="#6f6d68" /></svg> },
  { running: true, icon: <svg className="h-[21px] w-[21px]" viewBox="0 0 21 21"><path d="M15 1L20 3.300V17.700L15 20L5.500 11.800L2 14.500L0.500 13.500V7.500L2 6.500L5.500 9.200ZM15.200 6L9.500 10.500L15.200 15Z" fill="#1f93dc" fillRule="evenodd" /><path d="M15 1L20 3.300V17.700L15 20Z" fill="#3aa8ee" /></svg> },
  { running: true, icon: <svg className="h-[22px] w-[22px]" viewBox="0 0 22 22"><circle cx="11" cy="11" r="10.500" fill="#e33b2e" /><path d="M1.900 5.750L6.700 13.500L11 15.500L10 21.450A10.500 10.500 0 0 1 1.900 5.750Z" fill="#2da94f" /><path d="M20.400 6.300H11L15.300 13.500L10 21.450A10.500 10.500 0 0 0 20.400 6.300Z" fill="#fcc934" /><circle cx="11" cy="11" r="5" fill="#fff" /><circle cx="11" cy="11" r="3.900" fill="#4285f4" /></svg> },
  { icon: <svg className="h-[23px] w-[23px]" viewBox="0 0 23 23"><rect width="23" height="23" rx="4" fill="#fff" /><g fill="none" strokeWidth="2"><circle cx="7" cy="13" r="3.300" stroke="#2f8ef0" /><circle cx="16" cy="13" r="3.300" stroke="#e8374c" /><circle cx="11.500" cy="7.800" r="3.300" stroke="#1fa3f5" /></g><path d="M8 13L13 10L16.500 9.700A3.300 3.300 0 0 1 16 16.300" fill="none" stroke="#2f8ef0" strokeWidth="2" /><rect x="8" y="21" width="4" height="2" fill="#e94a8a" /><rect x="12" y="21" width="4" height="2" fill="#2f6af0" /></svg> },
  { running: true, icon: <span className="flex h-[23px] w-[23px] items-center justify-center bg-[#424341]"><SiSublimetext className="h-[16px] w-[16px] text-[#ff9800]" /></span> },
  { icon: <svg className="h-[16px] w-[21px]" viewBox="0 0 21 16"><rect x="0.500" y="1" width="20" height="14.500" rx="1" fill="#c9c8c3" stroke="#8a8984" /><rect x="1" y="1.500" width="19" height="3" fill="#e5e4df" /><circle cx="13.500" cy="9" r="5.300" fill="#83827d" /><circle cx="13.500" cy="9" r="3.600" fill="#23282e" /><circle cx="12.800" cy="8.300" r="1.200" fill="#81a5bf" /><rect x="2.500" y="2.500" width="4" height="3" fill="#777" /></svg> },
  { icon: <span className="flex h-[15px] w-[19px] items-center justify-center rounded-[2px] bg-[#2fbf49] text-[11px] font-semibold text-[#eaf8ea]">QC</span> },
  { running: true, icon: <svg className="h-[23px] w-[21px]" viewBox="0 0 21 23"><path d="M10.500 0.500L20.500 5.500V17L10.500 22.500L0.500 17V5.500Z" fill="#2f74e0" /><path d="M3.500 8.500H6L8 15.500L11.500 9.500L12.800 15.500L17 8.500H11" fill="none" stroke="#e8f0fc" strokeWidth="1.400" /></svg> },
  { running: true, icon: <span className="flex h-[19px] w-[19px] items-center justify-center rounded-[3px] bg-[#e02a1c]"><SiNeteasecloudmusic className="h-[15px] w-[15px] text-white" /></span> },
  { running: true, icon: <svg className="h-[19px] w-[22px]" viewBox="0 0 22 19"><rect x="0.700" y="0.700" width="20.600" height="17.600" rx="1" fill="#48423e" stroke="#d8d6d1" strokeWidth="1.400" /><rect x="2.500" y="2.500" width="17" height="12" fill="#6a0a0a" /><path d="M3 3H10V7.500H3ZM11.500 3H19V7.500H11.500ZM3 9H10V14H3ZM11.500 9H19V14H11.500Z" fill="#a91313" /><path d="M5 5H7M14 5H17M5 11H7" stroke="#f06060" /></svg> },
  { running: true, active: true, icon: <span className="scale-y-[1.150] pb-px text-[11px] font-semibold tracking-[-0.600px] text-[#f3f3f1]">RViz</span> },
];

function Dock() {
  return (
    <div className="flex h-[35px] shrink-0 items-center bg-[#4b4c4a]">
      {dockItems.map((it, i) => (
        <div key={i} className="flex h-full w-[36.250px] shrink-0 justify-center">
          <div className={`relative mt-px flex h-[33px] w-[33px] items-center justify-center rounded-[2px] ${it.active ? "bg-[#6a6b69]" : ""}`}>
            {it.icon}
            {it.running && <span className="absolute bottom-0 left-[15px] h-[3px] w-[3px] rounded-full bg-[#e9581f]" />}
          </div>
        </div>
      ))}
      <div className="flex-1" />
      <div className="mr-[10px] grid grid-cols-3 gap-[3px]">
        {Array.from({ length: 9 }, (_, i) => <span key={i} className="h-[3px] w-[3px] rounded-full bg-[#efefed]" />)}
      </div>
    </div>
  );
}

/* ------------------------------------------------------------------ */

export default function App() {
  return (
    <div className="flex h-[819px] w-[1452px] flex-col overflow-hidden bg-[#dcdcda] font-['Open_Sans','Noto_Sans_CJK_SC',sans-serif] leading-none">
      <div className="flex h-[816px] shrink-0 flex-col border-r-[3px] border-l border-[#36363a] bg-[#ecebe4]">
        <TopBars />
        <div className="flex h-[17px] shrink-0 items-center gap-[10.500px] bg-linear-to-b from-[#eeede6] to-[#e9e7e0] pl-[8px] text-[11.500px] text-[#0c0c0c]">
          <span><u>F</u>ile</span>
          <span><u>P</u>anels</span>
          <span><u>H</u>elp</span>
        </div>
        <Toolbar />
        <div className="flex h-[624px] shrink-0">
          <DisplaysPanel />
          <div className="flex w-[16px] shrink-0 items-center justify-end pr-[2px] pb-[5px]"><Triangle dir="left" /></div>
          <Viewport />
          <div className="flex w-[16px] shrink-0 items-center pb-[5px] pl-[2px]"><Triangle dir="right" /></div>
          <ViewsPanel />
        </div>
        <TimePanel />
        <Dock />
      </div>
      <div className="flex h-[3px] border-t border-[#28282a]">
        <div className="w-[85px]" />
        <div className="w-[22px] bg-[#1788d0]" />
        <div className="w-[8px]" />
        <div className="w-[32px] bg-[#1a1a1a]" />
      </div>
    </div>
  );
}
